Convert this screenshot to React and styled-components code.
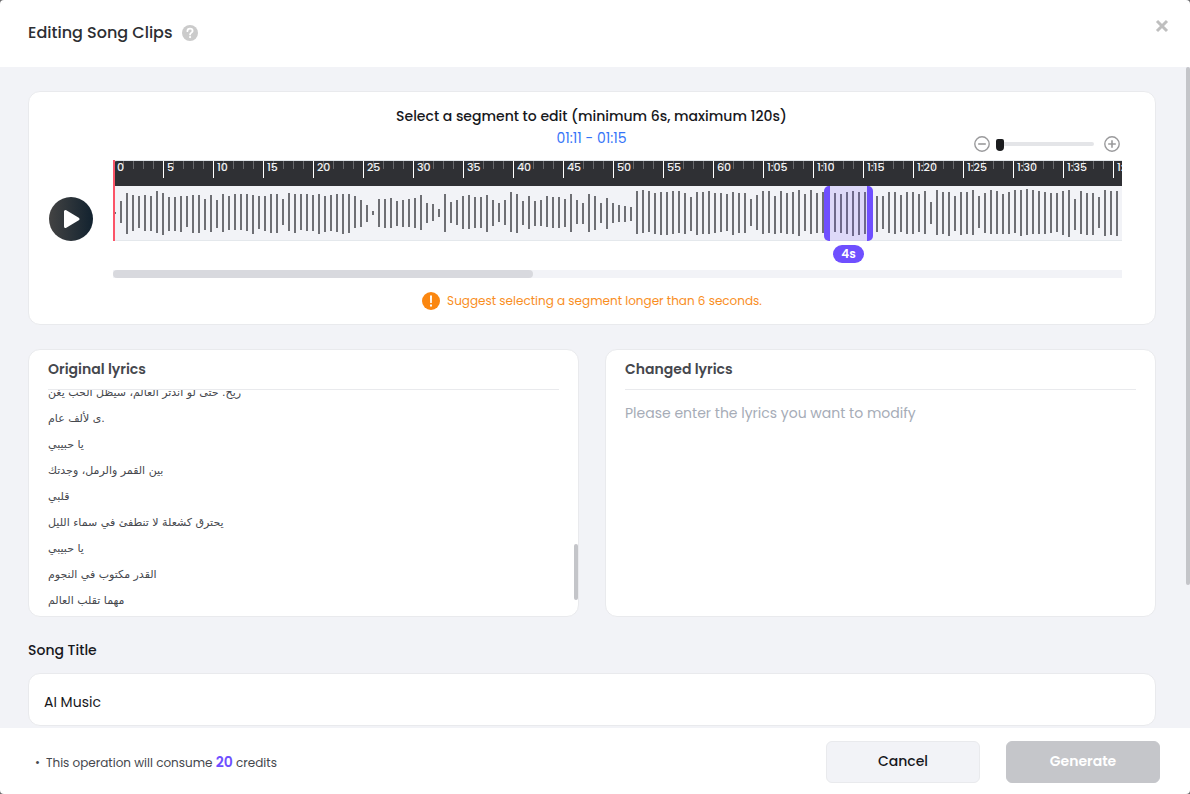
import React, { useState } from "react";
import styled, { createGlobalStyle } from "styled-components";

const GlobalStyle = createGlobalStyle`
  *, *::before, *::after { box-sizing: border-box; }
  body {
    margin: 0;
    background: #6a6a6c;
    font-family: Poppins, Inter, sans-serif;
    color: #17181c;
  }
  p, h1, h2 { margin: 0; }
  button, input, textarea { font-family: inherit; }
`;

const Dialog = styled.main`
  display: flex;
  flex-direction: column;
  height: 100vh;
  overflow: hidden;
  background: #fff;
  border-radius: 4px;
`;

const Header = styled.header`
  display: flex;
  justify-content: space-between;
  flex: none;
  height: 67px;
  padding: 18px 20px 0 28px;
`;

const HeaderTitle = styled.div`
  display: flex;
  align-items: center;
  gap: 9px;
  height: 30px;
`;

const Heading = styled.h1`
  font-size: 16px;
  line-height: 24px;
  font-weight: 500;
  color: #2d2f33;
`;

const IconButton = styled.button`
  display: flex;
  flex: none;
  align-items: center;
  justify-content: center;
  width: 16px;
  height: 16px;
  padding: 0;
  border: 0;
  background: none;
  cursor: pointer;
`;

const Content = styled.div`
  position: relative;
  flex: 1;
  min-height: 0;
  overflow: hidden;
  padding: 24px 34px 0 28px;
  background: #f2f3f7;
`;

const PageThumb = styled.div`
  position: absolute;
  top: 0;
  right: 0;
  width: 4px;
  height: 518px;
  border-radius: 2px;
  background: #c4c5c9;
`;

const Card = styled.section`
  border: 1px solid #e9eaed;
  border-radius: 12px;
  background: #fff;
`;

const EditorCard = styled(Card)`
  height: 234px;
  padding: 13px 33px 0 20px;
`;

const Prompt = styled.p`
  font-size: 14px;
  line-height: 22px;
  font-weight: 500;
  text-align: center;
`;

const Range = styled.p`
  font-size: 14px;
  line-height: 22px;
  text-align: center;
  color: #3473f8;
`;

const Centered = styled.div`
  padding-left: 12px;
`;

const ZoomRow = styled.div`
  display: flex;
  align-items: center;
  justify-content: flex-end;
  gap: 6px;
  height: 16px;
  margin-top: -13px;
  padding-right: 2px;
`;

const ZoomSlider = styled.input`
  appearance: none;
  width: 98px;
  height: 16px;
  margin: 0 4px 0 0;
  background: transparent;
  &::-webkit-slider-runnable-track {
    height: 4px;
    border-radius: 2px;
    background: #e4e5e8;
  }
  &::-webkit-slider-thumb {
    appearance: none;
    width: 8px;
    height: 12px;
    margin-top: -3px;
    border-radius: 2px 2px 4px 4px;
    background: #1b1c1e;
  }
`;

const EditorRow = styled.div`
  display: flex;
  gap: 20px;
  margin-top: 8px;
`;

const PlayButton = styled.button`
  display: flex;
  flex: none;
  align-items: center;
  justify-content: center;
  width: 44px;
  height: 44px;
  margin-top: 37px;
  padding: 0;
  border: 0;
  border-radius: 50%;
  background: linear-gradient(90deg, #434343, #12222f);
  cursor: pointer;
`;

const Timeline = styled.div`
  position: relative;
  flex: 1;
  min-width: 0;
`;

const Track = styled.div`
  height: 81px;
  overflow: hidden;
  border-top: 1px solid #e4e8ec;
  border-bottom: 1px solid #e4e8ec;
  border-radius: 4px 0 0 4px;
  background: #f2f3f7;
`;

const Ruler = styled.div`
  display: flex;
  width: max-content;
  height: 25px;
  background: #2f3034;
`;

const RulerStep = styled.div`
  width: 50px;
  height: 25px;
  padding-left: 4px;
  background:
    linear-gradient(#fff, #fff) 0 0 / 1px 17px no-repeat,
    repeating-linear-gradient(90deg, #66676b 0 1px, transparent 1px 10px) 0 0 / 50px 8px no-repeat;
  font-size: 11px;
  line-height: 13px;
  font-weight: 500;
  color: #f2f2f3;
`;

const Playhead = styled.div`
  position: absolute;
  top: 0;
  left: 0;
  width: 2px;
  height: 81px;
  background: #fb5468;
`;

const Selection = styled.div`
  position: absolute;
  top: 26px;
  left: 711px;
  width: 49px;
  height: 55px;
  border: solid #6f4fff;
  border-width: 0 6px;
  border-radius: 5px;
  background: rgba(111, 79, 255, 0.16);
`;

const Duration = styled.span`
  position: absolute;
  top: 85px;
  left: 720px;
  width: 31px;
  height: 18px;
  border-radius: 9px;
  background: #6f4fff;
  font-size: 12px;
  line-height: 18px;
  font-weight: 600;
  text-align: center;
  color: #fff;
`;

const ScrollRail = styled.div`
  height: 8px;
  margin-top: 29px;
  background: #f2f3f7;
`;

const ScrollThumb = styled.div`
  width: 420px;
  height: 8px;
  border-radius: 4px;
  background: #d8d9de;
`;

const Hint = styled.p`
  display: flex;
  align-items: center;
  justify-content: center;
  gap: 7px;
  margin-top: 12px;
  padding-left: 13px;
  font-size: 12px;
  line-height: 22px;
  color: #f98e1e;
`;

const Columns = styled.div`
  display: grid;
  grid-template-columns: 1fr 1fr;
  gap: 26px;
  margin-top: 24px;
`;

const LyricsCard = styled(Card)`
  position: relative;
  display: flex;
  flex-direction: column;
  height: 268px;
  padding: 0 19px 2px;
`;

const LyricsHeading = styled.h2`
  flex: none;
  height: 40px;
  border-bottom: 1px solid #e9eaed;
  font-size: 14px;
  line-height: 38px;
  font-weight: 600;
  color: #45474d;
`;

const LyricsView = styled.div`
  display: flex;
  flex: 1;
  flex-direction: column;
  justify-content: flex-end;
  min-height: 0;
  overflow: hidden;
`;

const LyricsLine = styled.p`
  flex: none;
  font-family: "DejaVu Sans", sans-serif;
  font-size: 11px;
  line-height: 26px;
  white-space: nowrap;
  color: #45474d;
`;

const LyricsThumb = styled.div`
  position: absolute;
  top: 194px;
  right: 0;
  width: 4px;
  height: 56px;
  border-radius: 2px;
  background: #c4c5c9;
`;

const LyricsInput = styled.textarea`
  flex: 1;
  width: 100%;
  padding: 12px 0 0;
  border: 0;
  outline: 0;
  resize: none;
  background: transparent;
  font-size: 14px;
  line-height: 22px;
  &::placeholder { color: #a6acb7; opacity: 1; }
`;

const FieldLabel = styled.label`
  display: block;
  margin-top: 22px;
  font-size: 14px;
  line-height: 22px;
  font-weight: 500;
`;

const TitleInput = styled.input`
  display: block;
  width: 100%;
  height: 53px;
  margin-top: 12px;
  padding: 6px 15px 0;
  border: 1px solid #e9eaed;
  border-radius: 12px;
  outline: 0;
  background: #fff;
  font-size: 14px;
  color: #17181c;
`;

const Footer = styled.footer`
  display: flex;
  flex: none;
  align-items: center;
  gap: 26px;
  height: 66px;
  padding: 2px 30px 0 35px;
`;

const Cost = styled.p`
  flex: 1;
  font-size: 12px;
  line-height: 20px;
  color: #45474d;
  strong {
    font-size: 14px;
    font-weight: 600;
    color: #6f4fff;
  }
  &::before {
    content: "•";
    margin-right: 6px;
  }
`;

const ActionButton = styled.button`
  width: 154px;
  height: 42px;
  padding: 0 6px 2px;
  border: 1px solid ${(p) => (p.$muted ? "#c5c6ca" : "#e9eaed")};
  border-radius: 6px;
  background: ${(p) => (p.$muted ? "#c5c6ca" : "#f2f3f7")};
  font-size: 14px;
  font-weight: ${(p) => (p.$muted ? 600 : 500)};
  color: ${(p) => (p.$muted ? "#fff" : "#17181c")};
`;

const TIMES = ["0", "5", "10", "15", "20", "25", "30", "35", "40", "45", "50", "55", "60",
  "1:05", "1:10", "1:15", "1:20", "1:25", "1:30", "1:35", "1:40"];

// Top and bottom of each bar, in pixels below the ruler.
const WAVE = `26-28 15-37 7-48 9-45 10-42 9-45 10-45 5-47 7-49 11-45 11-45 10-46 10-41 9-47 9-47 13-44 9-46 14-42
8-46 10-44 8-44 8-44 8-45 9-48 10-43 10-45 8-47 8-47 13-39 7-45 8-47 8-44 8-45 9-45 8-48 10-46
9-45 8-46 8-48 8-47 10-42 14-41 19-36 25-29 13-41 13-42 12-42 15-40 14-41 13-41 12-42 9-44 17-37 18-35
23-31 8-46 16-37 14-39 10-43 9-43 11-42 11-42 9-46 14-40 17-36 14-39 6-46 8-47 15-39 10-43 15-40 14-40
10-41 11-42 11-42 13-41 8-46 14-38 17-38 8-46 10-44 17-37 12-43 17-37 19-36 20-36 21-35 5-48 4-47 5-46
7-48 6-49 6-49 5-48 5-47 7-48 11-45 6-49 6-48 5-48 7-47 7-46 8-45 6-49 7-47 7-47 13-40 9-44
5-48 5-47 10-48 5-47 7-48 6-48 4-50 8-45 4-48 7-47 6-47 6-47 7-46 8-47 6-48 5-50 6-49 6-48
7-47 10-46 10-43 6-47 6-48 9-46 6-48 6-48 8-46 5-48 16-38 4-49 6-48 6-50 10-45 6-49 6-48 4-49
10-42 7-47 4-48 5-48 8-48 6-48 4-47 4-50 3-49 4-48 5-48 6-48 7-47 7-46 5-49 4-51 13-44 5-48
7-49 7-49 11-42 4-50 5-49 5-50`.trim().split(/\s+/).map((s) => s.split("-").map(Number));

const LYRICS = [
  "ريح. حتى لو اندثر العالم، سيظل الحب يغن",
  "ى لألف عام.",
  "يا حبيبي",
  "بين القمر والرمل، وجدتك",
  "قلبي",
  "يحترق كشعلة لا تنطفئ في سماء الليل",
  "يا حبيبي",
  "القدر مكتوب في النجوم",
  "مهما تقلب العالم",
];

const HelpIcon = () => (
  <svg width="16" height="16" viewBox="0 0 16 16" aria-hidden="true">
    <circle cx="8" cy="8" r="8" fill="#cbcbcb" />
    <path d="M5.4 6.200C5.4 4.600 6.500 3.700 8 3.700s2.600.9 2.600 2.300c0 1.600-2.500 1.700-2.500 3.600" fill="none" stroke="#fff" strokeWidth="1.8" strokeLinecap="round" />
    <circle cx="8.1" cy="12.100" r="1.100" fill="#fff" />
  </svg>
);

const CloseIcon = () => (
  <svg width="16" height="16" viewBox="0 0 16 16" aria-hidden="true">
    <path d="M3 3l10 10M13 3L3 13" stroke="#bfbfbf" strokeWidth="3" />
  </svg>
);

const ZoomIcon = ({ plus }) => (
  <svg width="16" height="16" viewBox="0 0 16 16" fill="none" stroke="#9a9a9c" strokeWidth="1.4" aria-hidden="true">
    <circle cx="8" cy="8" r="7.2" />
    <path d={plus ? "M4.2 8h7.6M8 4.2v7.6" : "M4.2 8h7.6"} strokeWidth="1.6" />
  </svg>
);

const PlayIcon = () => (
  <svg width="20" height="22" viewBox="0 0 20 22" aria-hidden="true">
    <path d="M4.5 3.5v15L17 11z" fill="#fff" stroke="#fff" strokeWidth="3" strokeLinejoin="round" />
  </svg>
);

const WarnIcon = () => (
  <svg width="18" height="18" viewBox="0 0 18 18" aria-hidden="true">
    <circle cx="9" cy="9" r="9" fill="#fb8710" />
    <path d="M8 3.5h2l-.2 7.5H8.2z" fill="#fff" />
    <rect x="8" y="12.5" width="2" height="2" fill="#fff" />
  </svg>
);

const Waveform = () => (
  <svg width="1020" height="55" viewBox="0 0 1020 55" role="img" aria-label="Song waveform">
    {WAVE.map(([top, bottom], i) => (
      <rect key={i} x={1 + i * 6} y={top} width="2" height={bottom - top} fill="#6e6f74" />
    ))}
  </svg>
);

export default function App() {
  const [zoom, setZoom] = useState(0);
  const [title, setTitle] = useState("AI Music");
  const [changed, setChanged] = useState("");

  return (
    <>
      <GlobalStyle />
      <Dialog>
        <Header>
          <HeaderTitle>
            <Heading>Editing Song Clips</Heading>
            <IconButton aria-label="Help"><HelpIcon /></IconButton>
          </HeaderTitle>
          <IconButton aria-label="Close"><CloseIcon /></IconButton>
        </Header>

        <Content>
          <EditorCard>
            <Centered>
              <Prompt>Select a segment to edit (minimum 6s, maximum 120s)</Prompt>
              <Range>01:11 - 01:15</Range>
            </Centered>
            <ZoomRow>
              <IconButton aria-label="Zoom out"><ZoomIcon /></IconButton>
              <ZoomSlider type="range" aria-label="Zoom" min="0" max="100" value={zoom}
                onChange={(e) => setZoom(Number(e.target.value))} />
              <IconButton aria-label="Zoom in"><ZoomIcon plus /></IconButton>
            </ZoomRow>
            <EditorRow>
              <PlayButton aria-label="Play"><PlayIcon /></PlayButton>
              <Timeline>
                <Track>
                  <Ruler>
                    {TIMES.map((t) => <RulerStep key={t}>{t}</RulerStep>)}
                  </Ruler>
                  <Waveform />
                </Track>
                <Playhead />
                <Selection />
                <Duration>4s</Duration>
                <ScrollRail><ScrollThumb /></ScrollRail>
              </Timeline>
            </EditorRow>
            <Hint><WarnIcon />Suggest selecting a segment longer than 6 seconds.</Hint>
          </EditorCard>

          <Columns>
            <LyricsCard>
              <LyricsHeading>Original lyrics</LyricsHeading>
              <LyricsView>
                {LYRICS.map((line, i) => <LyricsLine key={i}>{line}</LyricsLine>)}
              </LyricsView>
              <LyricsThumb />
            </LyricsCard>
            <LyricsCard>
              <LyricsHeading as="label" htmlFor="changed">Changed lyrics</LyricsHeading>
              <LyricsInput id="changed" value={changed} onChange={(e) => setChanged(e.target.value)}
                placeholder="Please enter the lyrics you want to modify" />
            </LyricsCard>
          </Columns>

          <FieldLabel htmlFor="title">Song Title</FieldLabel>
          <TitleInput id="title" value={title} onChange={(e) => setTitle(e.target.value)} />
          <PageThumb />
        </Content>

        <Footer>
          <Cost>This operation will consume <strong>20</strong> credits</Cost>
          <ActionButton>Cancel</ActionButton>
          <ActionButton $muted>Generate</ActionButton>
        </Footer>
      </Dialog>
    </>
  );
}
